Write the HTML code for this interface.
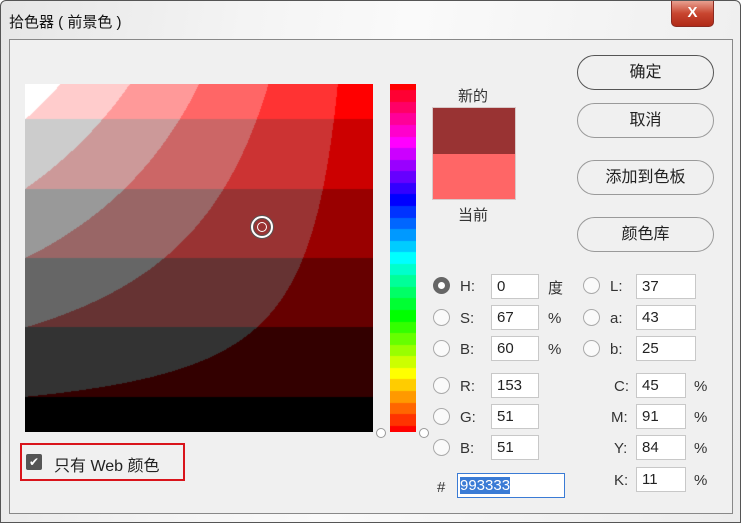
<!DOCTYPE html>
<html><head><meta charset="utf-8"><style>
*{box-sizing:border-box}
body{margin:0;width:741px;height:523px;overflow:hidden;background:#fff;font-family:"Liberation Sans","Noto Sans CJK SC",sans-serif;font-size:15px;color:#222}
#win{position:absolute;left:0;top:0;width:741px;height:523px;border:1px solid #555;border-radius:6px 6px 0 0;background:linear-gradient(100deg,#e6e6e6 0%,#f4f4f4 30%,#fafafa 50%,#ececec 100%)}
#title{position:absolute;left:8px;top:10px;font-size:15px;color:#111}
#close{position:absolute;left:670px;top:0;width:43px;height:26px;border:1px solid #8a2a20;border-top:none;border-radius:0 0 5px 5px;background:linear-gradient(#e8a090,#c8452f 50%,#b02a18);color:#fff;font-weight:bold;text-align:center;line-height:24px;font-size:15px}
#panel{position:absolute;left:9px;top:39px;width:724px;height:475px;background:#f0f0f0;border:1px solid #888}
.a{position:absolute}
canvas{position:absolute}
.btn{position:absolute;left:577px;width:137px;height:35px;border:1px solid #9a9a9a;border-radius:18px;text-align:center;line-height:33px;font-size:16px;background:#f0f0f0}
.rad{position:absolute;width:17px;height:17px;border:1px solid #aaa;border-radius:50%;background:#fafafa}
.inp{position:absolute;height:25px;border:1px solid #c8c8c8;background:#fff;padding-left:5px;line-height:23px;font-size:15px}
.lb{position:absolute;font-size:15px;color:#333}
</style></head><body>
<div id="win">
<div id="title">拾色器 ( 前景色 )</div>
<div id="close">X</div>
</div>
<div id="panel"></div>
<canvas id="f" width="348" height="348" style="left:25px;top:84px"></canvas>
<canvas id="h" width="26" height="348" style="left:390px;top:84px"></canvas>
<div class="a" style="left:251px;top:216px;width:22px;height:22px;border:2px solid #fff;border-radius:50%;box-shadow:0 0 0 1px #555,inset 0 0 0 1px #555"><div style="margin:4px;width:10px;height:10px;border:1.5px solid #fff;border-radius:50%"></div></div>
<div class="a" style="left:376px;top:428px;width:10px;height:10px;border:1px solid #999;border-radius:50%;background:#fff"></div>
<div class="a" style="left:419px;top:428px;width:10px;height:10px;border:1px solid #999;border-radius:50%;background:#fff"></div>
<div class="lb" style="left:458px;top:85px">新的</div>
<div class="a" style="left:432px;top:107px;width:84px;height:93px;border:1px solid #d8c8c8"></div>
<div class="a" style="left:433px;top:108px;width:82px;height:46px;background:#993333"></div>
<div class="a" style="left:433px;top:154px;width:82px;height:45px;background:#ff6666"></div>
<div class="lb" style="left:458px;top:204px">当前</div>
<div class="btn" style="top:55px;border-color:#555">确定</div>
<div class="btn" style="top:103px">取消</div>
<div class="btn" style="top:160px">添加到色板</div>
<div class="btn" style="top:217px">颜色库</div>

<div class="rad" style="left:433px;top:277px;border:5px solid #666;background:#fff"></div>
<div class="rad" style="left:433px;top:309px"></div>
<div class="rad" style="left:433px;top:340px"></div>
<div class="rad" style="left:433px;top:377px"></div>
<div class="rad" style="left:433px;top:408px"></div>
<div class="rad" style="left:433px;top:439px"></div>
<div class="rad" style="left:583px;top:277px"></div>
<div class="rad" style="left:583px;top:309px"></div>
<div class="rad" style="left:583px;top:340px"></div>

<div class="lb" style="left:460px;top:278px">H:</div>
<div class="lb" style="left:460px;top:310px">S:</div>
<div class="lb" style="left:460px;top:341px">B:</div>
<div class="lb" style="left:460px;top:378px">R:</div>
<div class="lb" style="left:460px;top:409px">G:</div>
<div class="lb" style="left:460px;top:440px">B:</div>
<div class="inp" style="left:491px;top:274px;width:48px">0</div>
<div class="inp" style="left:491px;top:305px;width:48px">67</div>
<div class="inp" style="left:491px;top:336px;width:48px">60</div>
<div class="inp" style="left:491px;top:373px;width:48px">153</div>
<div class="inp" style="left:491px;top:404px;width:48px">51</div>
<div class="inp" style="left:491px;top:435px;width:48px">51</div>
<div class="lb" style="left:548px;top:277px">度</div>
<div class="lb" style="left:548px;top:310px">%</div>
<div class="lb" style="left:548px;top:341px">%</div>

<div class="lb" style="left:610px;top:278px">L:</div>
<div class="lb" style="left:610px;top:310px">a:</div>
<div class="lb" style="left:610px;top:341px">b:</div>
<div class="inp" style="left:636px;top:274px;width:60px">37</div>
<div class="inp" style="left:636px;top:305px;width:60px">43</div>
<div class="inp" style="left:636px;top:336px;width:60px">25</div>

<div class="lb" style="left:614px;top:378px">C:</div>
<div class="lb" style="left:611px;top:409px">M:</div>
<div class="lb" style="left:614px;top:440px">Y:</div>
<div class="lb" style="left:614px;top:472px">K:</div>
<div class="inp" style="left:636px;top:373px;width:50px">45</div>
<div class="inp" style="left:636px;top:404px;width:50px">91</div>
<div class="inp" style="left:636px;top:435px;width:50px">84</div>
<div class="inp" style="left:636px;top:467px;width:50px">11</div>
<div class="lb" style="left:694px;top:378px">%</div>
<div class="lb" style="left:694px;top:409px">%</div>
<div class="lb" style="left:694px;top:440px">%</div>
<div class="lb" style="left:694px;top:472px">%</div>

<div class="lb" style="left:437px;top:479px">#</div>
<div class="inp" style="left:457px;top:473px;width:108px;border:1px solid #3a7bd5;padding-left:2px"><span style="background:#3a7bd5;color:#fff">993333</span></div>

<div class="a" style="left:20px;top:443px;width:165px;height:38px;border:2px solid #d9141b"></div>
<div class="a" style="left:26px;top:454px;width:16px;height:16px;background:#555;border-radius:2px;color:#fff;font-size:12px;line-height:16px;text-align:center">✔</div>
<div class="lb" style="left:54px;top:452px;font-size:16px;color:#222">只有 Web 颜色</div>

<script>
function q(v){return Math.round(v*5)/5*255}
var c=document.getElementById('f').getContext('2d'),d=c.createImageData(348,348);
for(var y=0;y<348;y++)for(var x=0;x<348;x++){var s=x/347,v=1-y/347,i=(y*348+x)*4;d.data[i]=q(v);d.data[i+1]=d.data[i+2]=q(v*(1-s));d.data[i+3]=255}
c.putImageData(d,0,0);
var h=document.getElementById('h').getContext('2d'),e=h.createImageData(26,348);
for(var y=0;y<348;y++){var H=((1-y/347)*6)%6,k=function(n){var t=(n+H)%6;return 1-Math.max(0,Math.min(t,4-t,1))};
var r=q(k(5)),g=q(k(3)),b=q(k(1));for(var x=0;x<26;x++){var i=(y*26+x)*4;e.data[i]=r;e.data[i+1]=g;e.data[i+2]=b;e.data[i+3]=255}}
h.putImageData(e,0,0);
</script>
</body></html>
